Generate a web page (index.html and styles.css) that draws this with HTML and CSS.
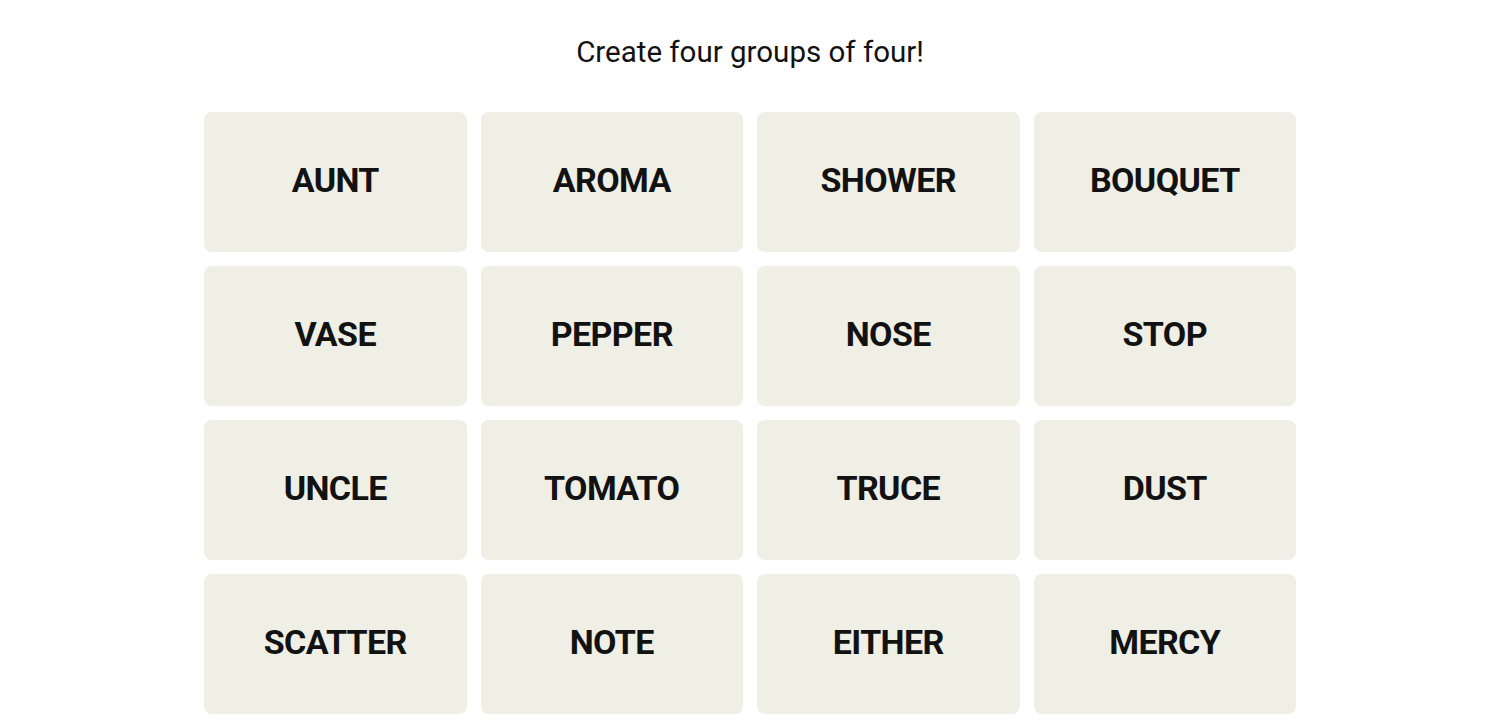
FILE: index.html
```html
<!DOCTYPE html>
<html lang="en">
<head>
  <meta charset="UTF-8">
  <title>Connections</title>
  <link rel="stylesheet" href="styles.css">
</head>
<body>
  <div class="container">
    <h2 class="prompt">Create four groups of four!</h2>
    <div class="board">
      <button class="tile">AUNT</button>
      <button class="tile">AROMA</button>
      <button class="tile">SHOWER</button>
      <button class="tile">BOUQUET</button>
      <button class="tile">VASE</button>
      <button class="tile">PEPPER</button>
      <button class="tile">NOSE</button>
      <button class="tile">STOP</button>
      <button class="tile">UNCLE</button>
      <button class="tile">TOMATO</button>
      <button class="tile">TRUCE</button>
      <button class="tile">DUST</button>
      <button class="tile">SCATTER</button>
      <button class="tile">NOTE</button>
      <button class="tile">EITHER</button>
      <button class="tile">MERCY</button>
    </div>
  </div>
</body>
</html>
```

FILE: styles.css
```css
body {
  margin: 0;
  background-color: #fff;
  font-family: Roboto, "Liberation Sans", sans-serif;
  color: #121212;
}

.container {
  display: flex;
  flex-direction: column;
  align-items: center;
  padding-top: 33px;
}

.prompt {
  margin: 0;
  font-size: 29.5px;
  font-weight: 400;
  line-height: 38px;
}

.board {
  display: grid;
  grid-template-columns: repeat(4, 262.5px);
  grid-auto-rows: 140px;
  gap: 14px;
  margin-top: 41px;
}

.tile {
  border: none;
  border-radius: 8px;
  padding: 0 0 5px;
  background-color: #efefe6;
  color: #121212;
  font-family: Roboto, "Liberation Sans", sans-serif;
  font-size: 34px;
  font-weight: 700;
  letter-spacing: -0.6px;
  text-transform: uppercase;
  cursor: pointer;
}
```
